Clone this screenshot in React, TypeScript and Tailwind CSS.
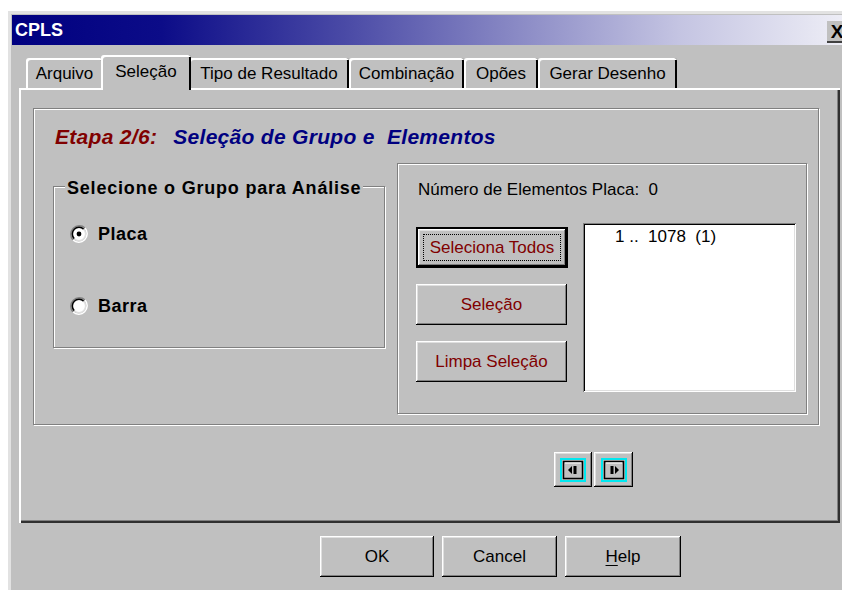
import React from "react";

const raised =
  "bg-[#c0c0c0] shadow-[inset_-1px_-1px_0_#000,inset_1px_1px_0_#fff,inset_-2px_-2px_0_#808080,inset_2px_2px_0_#dfdfdf]";
const sunken =
  "bg-white shadow-[inset_1px_1px_0_#808080,inset_-1px_-1px_0_#fff,inset_2px_2px_0_#000,inset_-2px_-2px_0_#dfdfdf]";
const etched =
  "border border-[#808080] shadow-[inset_1px_1px_0_#fff,1px_1px_0_#fff]";

function Radio({ checked }: { checked?: boolean }) {
  return (
    <svg width="18" height="18" viewBox="0 0 18 18">
      <path d="M15 3 A8.5 8.5 0 0 0 3 15" fill="none" stroke="#808080" strokeWidth="1.5" />
      <path d="M3 15 A8.5 8.5 0 0 0 15 3" fill="none" stroke="#fff" strokeWidth="1.5" />
      <circle cx="9" cy="9" r="6.6" fill="#fff" />
      <path d="M13.7 4.3 A6.6 6.6 0 0 0 4.3 13.7" fill="none" stroke="#000" strokeWidth="1.5" />
      <path d="M4.3 13.7 A6.6 6.6 0 0 0 13.7 4.3" fill="none" stroke="#dfdfdf" strokeWidth="1.5" />
      {checked && <circle cx="9" cy="9" r="2.4" fill="#000" />}
    </svg>
  );
}

function NavIcon({ dir }: { dir: "prev" | "next" }) {
  return (
    <svg width="26" height="24" viewBox="0 0 26 24">
      <rect x="1" y="1" width="24" height="22" fill="none" stroke="#00e8f0" strokeWidth="2" />
      <rect x="3.5" y="3.5" width="19" height="17" fill="#c0c0c0" stroke="#000" strokeWidth="1.5" />
      <line x1="5" y1="5" x2="21" y2="5" stroke="#fff" strokeWidth="1" />
      {dir === "prev" ? (
        <>
          <path d="M8 12 L12 8 L12 16 Z" fill="#000" />
          <rect x="13.5" y="8" width="3" height="8" fill="#000" />
        </>
      ) : (
        <>
          <rect x="9.5" y="8" width="3" height="8" fill="#000" />
          <path d="M18 12 L14 8 L14 16 Z" fill="#000" />
        </>
      )}
    </svg>
  );
}

const tabs = [
  { label: "Arquivo", w: "w-[77px]" },
  { label: "Seleção", w: "w-[90px]", active: true },
  { label: "Tipo de Resultado", w: "w-[160px]" },
  { label: "Combinação", w: "w-[115px]" },
  { label: "Opões", w: "w-[74px]" },
  { label: "Gerar Desenho", w: "w-[139px]" },
];

function Tabs() {
  return (
    <div className="ml-[7px] mt-[10px] flex h-[33px] items-start">
      {tabs.map((t) =>
        t.active ? (
          <div
            key={t.label}
            className={`relative z-10 -mx-[2px] flex h-[35px] ${t.w} items-start justify-center rounded-t-[3px] bg-[#c0c0c0] pt-[4px] shadow-[inset_2px_2px_0_#fff,inset_-2px_0_0_#000]`}
          >
            {t.label}
          </div>
        ) : (
          <div
            key={t.label}
            className={`mt-[3px] flex h-[30px] ${t.w} items-center justify-center rounded-t-[3px] bg-[#c0c0c0] pt-[2px] shadow-[inset_2px_2px_0_#fff,inset_-2px_0_0_#000]`}
          >
            {t.label}
          </div>
        )
      )}
    </div>
  );
}

function DialogButton({
  label,
  w,
  focused,
  red,
}: {
  label: React.ReactNode;
  w: string;
  focused?: boolean;
  red?: boolean;
}) {
  if (focused) {
    return (
      <div className={`${w} h-[41px] border-2 border-black`}>
        <div className={`flex h-full items-center justify-center ${raised} p-[5px]`}>
          <div className="flex h-full w-full items-center justify-center border border-dotted border-black text-[#800000]">
            {label}
          </div>
        </div>
      </div>
    );
  }
  return (
    <div
      className={`${w} flex h-[41px] items-center justify-center ${raised} ${red ? "text-[#800000]" : "text-black"}`}
    >
      {label}
    </div>
  );
}

export default function App() {
  return (
    <div className="h-[590px] w-[842px] overflow-hidden bg-white font-['Liberation_Sans',Arial,sans-serif] text-[17px] text-black">
      <div className="ml-[8px] mt-[11px] h-[600px] w-[838px] border-l-[3px] border-t-[3px] border-[#e2e2e2] bg-[#c0c0c0] p-[1px]">
        {/* caption bar */}
        <div className="flex h-[30px] items-center justify-between bg-[linear-gradient(to_right,#000080_0%,#0c0c88_18%,#4a4aa6_40%,#8888c4_60%,#c4c4e2_80%,#eeeef6_100%)] pl-[3px]">
          <span className="text-[18px] font-bold text-white">CPLS</span>
          <div className="mt-[4px] flex h-[22px] w-[18px] items-center justify-center border-b-2 border-[#404040] bg-[#c0c0c0] pl-[2px] text-[19px] font-bold leading-none">
            X
          </div>
        </div>

        <div className="pl-[7px]">
          <Tabs />

          {/* tab page */}
          <div className="h-[435px] w-[821px] bg-[#c0c0c0] pl-[14px] pt-[20px] shadow-[inset_2px_2px_0_#fff,inset_-2px_-2px_0_#303030,inset_-3px_-3px_0_#808080]">
            <div className={`h-[317px] w-[786px] ${etched} pl-[19px] pt-[13px]`}>
              <div className="flex h-[29px] items-center gap-[16px] pl-[2px] text-[21px] font-bold italic tracking-[0.3px]">
                <span className="text-[#800000]">Etapa 2/6:</span>
                <span className="text-[#000080]">Seleção de Grupo e&nbsp; Elementos</span>
              </div>

              <div className="mt-[12px] flex items-start gap-[12px]">
                {/* group selection */}
                <div className={`relative mt-[23px] h-[162px] w-[332px] ${etched}`}>
                  <span className="absolute -top-[12px] left-[11px] bg-[#c0c0c0] px-[2px] text-[18px] font-bold tracking-[0.8px]">
                    Selecione o Grupo para Análise
                  </span>
                  <div className="flex flex-col gap-[54px] pl-[16px] pt-[38px]">
                    <label className="flex h-[18px] items-center gap-[10px] text-[18px] font-bold tracking-[0.5px]">
                      <Radio checked />
                      Placa
                    </label>
                    <label className="flex h-[18px] items-center gap-[10px] text-[18px] font-bold tracking-[0.5px]">
                      <Radio />
                      Barra
                    </label>
                  </div>
                </div>

                {/* elements */}
                <div className={`h-[251px] w-[410px] ${etched} pl-[18px] pt-[14px]`}>
                  <div className="pl-[2px] leading-[24px]">Número de Elementos Placa:&nbsp; 0</div>
                  <div className="mt-[21px] flex items-start gap-[15px]">
                    <div className="mt-[4px] flex flex-col gap-[16px]">
                      <DialogButton label="Seleciona Todos" w="w-[152px]" focused />
                      <DialogButton label="Seleção" w="w-[151px]" red />
                      <DialogButton label="Limpa Seleção" w="w-[151px]" red />
                    </div>
                    <div className={`h-[169px] w-[213px] ${sunken} pl-[32px] pt-[4px] leading-[20px]`}>
                      1 ..&nbsp; 1078&nbsp; (1)
                    </div>
                  </div>
                </div>
              </div>
            </div>

            {/* step navigation */}
            <div className="ml-[521px] mt-[27px] flex gap-[2px]">
              <div className={`flex h-[35px] w-[38px] items-center justify-center ${raised}`}>
                <NavIcon dir="prev" />
              </div>
              <div className={`flex h-[35px] w-[39px] items-center justify-center ${raised}`}>
                <NavIcon dir="next" />
              </div>
            </div>
          </div>

          {/* dialog buttons */}
          <div className="ml-[301px] mt-[13px] flex gap-[8px]">
            <DialogButton label="OK" w="w-[114px]" />
            <DialogButton label="Cancel" w="w-[115px]" />
            <DialogButton
              label={
                <span>
                  <span className="underline underline-offset-[3px]">H</span>elp
                </span>
              }
              w="w-[116px]"
            />
          </div>
        </div>
      </div>
    </div>
  );
}
